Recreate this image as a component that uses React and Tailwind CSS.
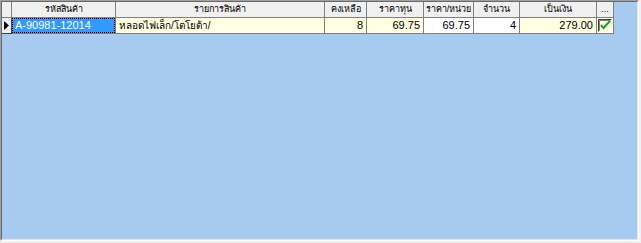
import React from 'react';

const COLS = [
    { key: 'code', title: 'รหัสสินค้า', w: 104 },
    { key: 'name', title: 'รายการสินค้า', w: 209 },
    { key: 'left', title: 'คงเหลือ', w: 42 },
    { key: 'cost', title: 'ราคาทุน', w: 57 },
    { key: 'price', title: 'ราคา/หน่วย', w: 50 },
    { key: 'qty', title: 'จำนวน', w: 46 },
    { key: 'total', title: 'เป็นเงิน', w: 77 },
    { key: 'more', title: '...', w: 17 },
];

const ROW = {
    code: 'A-90981-12014',
    name: 'หลอดไฟเล็ก/โตโยต้า/',
    left: '8',
    cost: '69.75',
    price: '69.75',
    qty: '4',
    total: '279.00',
};

const WHITE_CELLS = ['price', 'qty'];
const RIGHT_CELLS = ['left', 'cost', 'price', 'qty', 'total'];

function CheckBox() {
    return (
        <svg width="14" height="13" viewBox="0 0 14 13">
            <path d="M0.5 12.5 L0.5 0.5 L13.5 0.5" fill="none" stroke="#404040" strokeWidth="1" />
            <path d="M1.5 11.5 L1.5 1.5 L12.5 1.5" fill="none" stroke="#808080" strokeWidth="1" />
            <path d="M3 6 L5.5 9 L12 2" fill="none" stroke="#1aa01a" strokeWidth="2" />
        </svg>
    );
}

export default function App() {
    return (
        <div
            className="w-[641px] h-[243px] bg-[#f0f0f0] text-[11px] leading-none text-black"
            style={{ fontFamily: '"Tahoma", "Liberation Sans", "Noto Sans", sans-serif' }}
        >
            <div className="w-[639px] h-[241px] border border-t-[#a0a0a0] border-l-[#a0a0a0] border-r-white border-b-white">
                <div className="w-full h-full border border-t-[#696969] border-l-[#696969] border-r-[#e3e3e3] border-b-[#e3e3e3] bg-[#a6caf0] overflow-hidden">
                    {/* header */}
                    <div className="flex h-[16px]">
                        <div className="w-[10px] shrink-0 bg-[#f0f0f0] border-r border-b border-[#808080]" />
                        {COLS.map(c => (
                            <div
                                key={c.key}
                                style={{ width: c.w }}
                                className="shrink-0 bg-[#f0f0f0] border-r border-b border-[#808080] flex items-center justify-center pb-[1px] text-[9px] whitespace-nowrap overflow-hidden"
                            >
                                {c.title}
                            </div>
                        ))}
                    </div>
                    {/* data row */}
                    <div className="flex h-[16px]">
                        <div className="w-[10px] shrink-0 bg-[#f0f0f0] border-r border-b border-[#404040] flex items-center justify-center">
                            <svg width="5" height="9" viewBox="0 0 5 9">
                                <path d="M0 0 L5 4.5 L0 9 Z" fill="#000" />
                            </svg>
                        </div>
                        {COLS.map(c => {
                            if (c.key === 'code') {
                                return (
                                    <div
                                        key={c.key}
                                        style={{ width: c.w }}
                                        className="shrink-0 bg-[#3399ff] text-white border-r border-b border-[#808080] flex items-center"
                                    >
                                        <span className="border border-dotted border-[#000] w-full h-full flex items-center px-[2px]">{ROW.code}</span>
                                    </div>
                                );
                            }
                            if (c.key === 'more') {
                                return (
                                    <div
                                        key={c.key}
                                        style={{ width: c.w }}
                                        className="shrink-0 bg-[#ffffe1] border-r border-b border-[#808080] flex items-center justify-center"
                                    >
                                        <CheckBox />
                                    </div>
                                );
                            }
                            const bg = WHITE_CELLS.includes(c.key) ? 'bg-white' : 'bg-[#ffffe1]';
                            const align = RIGHT_CELLS.includes(c.key) ? 'justify-end' : 'justify-start';
                            const size = c.key === 'name' ? 'text-[10px]' : 'text-[11px]';
                            return (
                                <div
                                    key={c.key}
                                    style={{ width: c.w }}
                                    className={`shrink-0 ${bg} ${align} ${size} border-r border-b border-[#808080] flex items-center px-[3px] whitespace-nowrap overflow-hidden`}
                                >
                                    {ROW[c.key]}
                                </div>
                            );
                        })}
                    </div>
                </div>
            </div>
        </div>
    );
}
